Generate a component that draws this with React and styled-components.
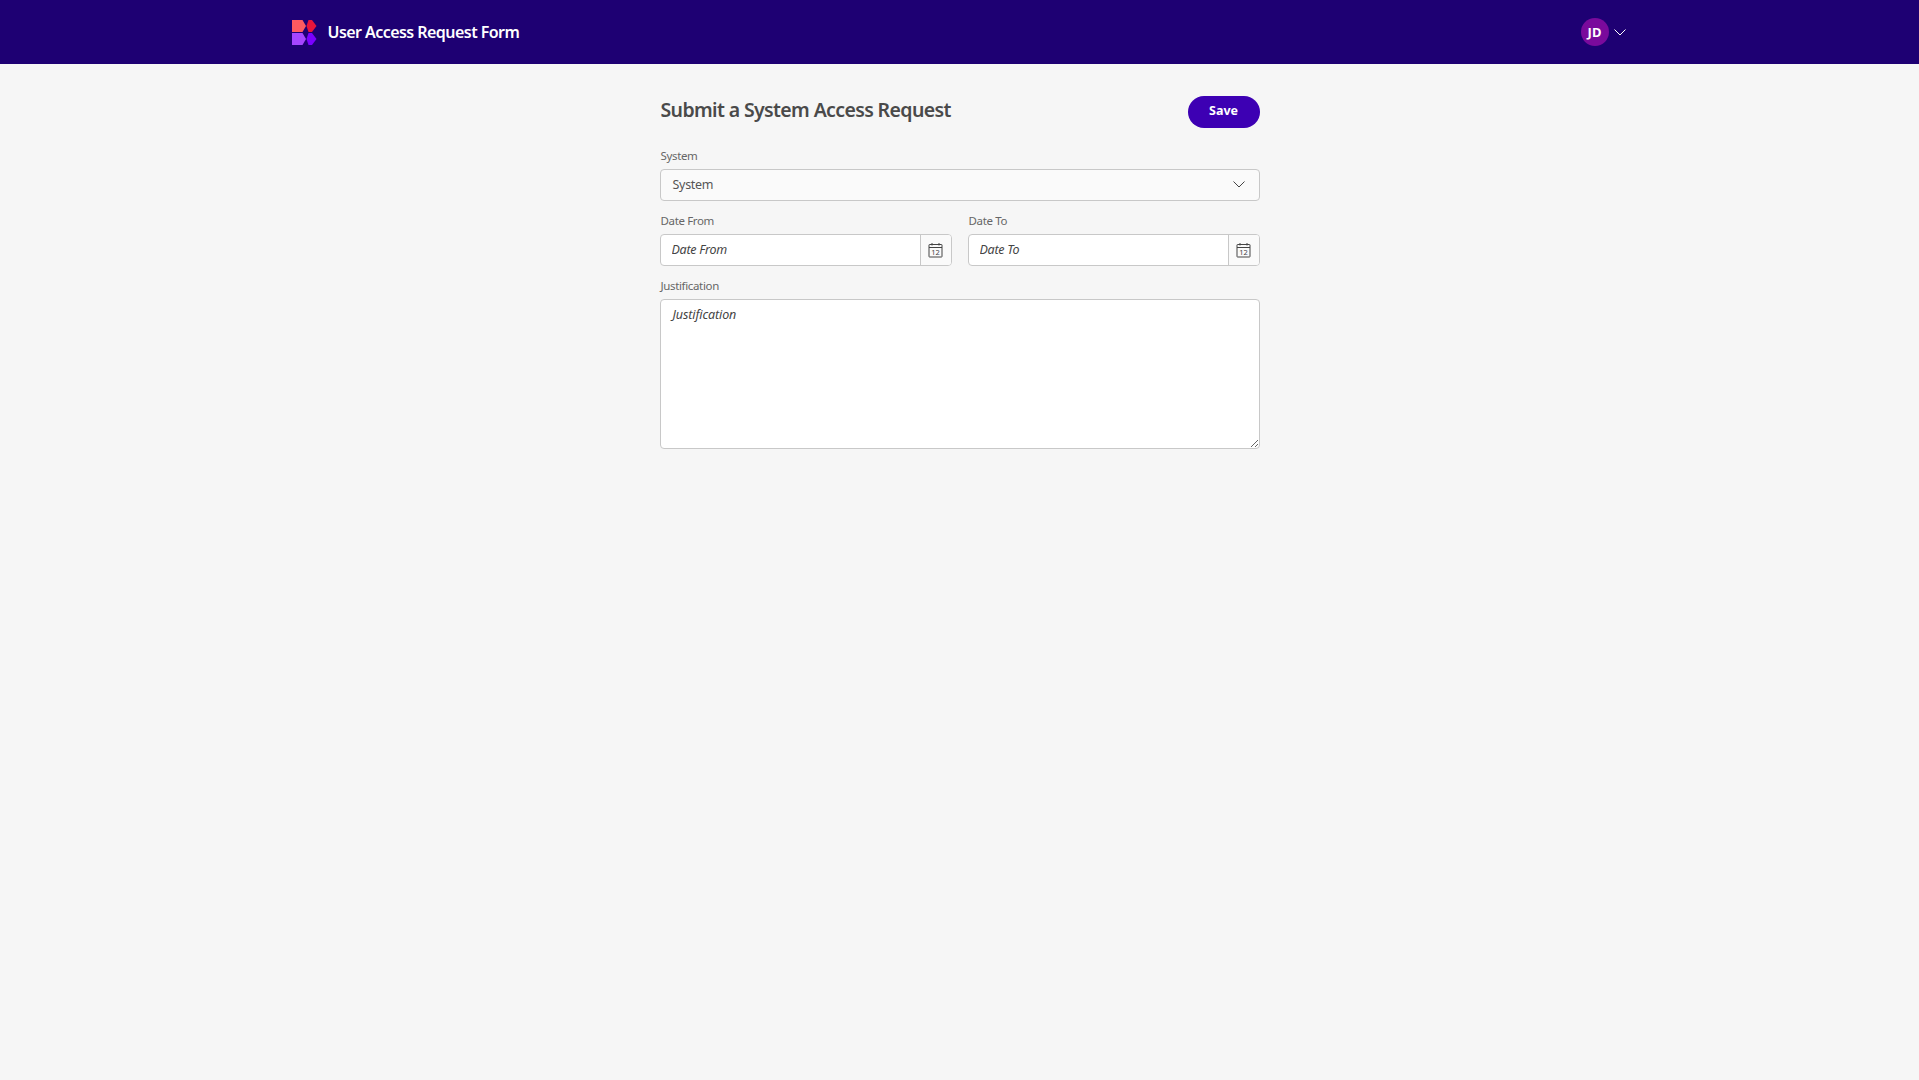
import styled, { createGlobalStyle } from 'styled-components';

const GlobalStyle = createGlobalStyle`
    html, body {
        margin: 0;
        padding: 0;
        background-color: #f6f6f6;
    }
    * {
        box-sizing: border-box;
    }
`
const font = `"Noto Sans", "Open Sans", sans-serif`;

const Page = styled.div`
    min-height: 100vh;
    background-color: #f6f6f6;
    font-family: ${font};
`
const TopBar = styled.header`
    height: 64px;
    background-color: #1e0073;
    display: flex;
    justify-content: center;
`
const TopBarInner = styled.div`
    width: 1360px;
    padding: 0 13px 0 12px;
    display: flex;
    align-items: center;
    justify-content: space-between;
`
const Brand = styled.div`
    display: flex;
    align-items: center;
    gap: 11px;
`
const AppName = styled.span`
    color: #fff;
    font-size: 16px;
    font-weight: 600;
    letter-spacing: -0.55px;
`
const UserMenu = styled.div`
    display: flex;
    align-items: center;
    gap: 4px;
`
const Avatar = styled.div`
    width: 28px;
    height: 28px;
    border-radius: 50%;
    background-color: #7a0a9c;
    color: #fff;
    font-size: 13px;
    font-weight: 700;
    display: flex;
    align-items: center;
    justify-content: center;
`
const Content = styled.main`
    width: 600px;
    margin: 0 auto;
    padding-top: 32px;
`
const TitleRow = styled.div`
    display: flex;
    align-items: flex-start;
    justify-content: space-between;
    height: 51px;
`
const Title = styled.h1`
    margin: 0;
    padding-left: 1px;
    color: #4a4a4a;
    font-size: 19.5px;
    line-height: 28px;
    font-weight: 600;
    letter-spacing: -0.63px;
`
const SaveButton = styled.button`
    width: 72px;
    height: 32px;
    border: 0;
    border-radius: 16px;
    background-color: #3d00b3;
    color: #fff;
    font-family: ${font};
    font-size: 12.5px;
    font-weight: 700;
    padding: 0 0 3px 0;
`
const Field = styled.div`
    margin-bottom: 11px;
    flex: 1;
`
const Label = styled.label`
    display: block;
    height: 22px;
    padding-left: 1px;
    color: #666;
    font-size: 11.5px;
    line-height: 18px;
    letter-spacing: -0.35px;
`
const Select = styled.div`
    height: 32px;
    border: 1px solid #c8c8c8;
    border-radius: 4px;
    background-color: #fafafa;
    color: #555;
    font-size: 12.5px;
    letter-spacing: -0.3px;
    padding: 0 13px 2px 12px;
    display: flex;
    align-items: center;
    justify-content: space-between;
`
const Row = styled.div`
    display: flex;
    gap: 16px;
`
const InputGroup = styled.div`
    height: 32px;
    display: flex;
    border: 1px solid #c8c8c8;
    border-radius: 4px;
    background-color: #fff;
    overflow: hidden;
`
const placeholder = `
    color: #444;
    font-family: ${font};
    font-size: 12.5px;
    font-style: italic;
    letter-spacing: -0.25px;
    &::placeholder {
        color: #444;
        opacity: 1;
    }
`
const DateInput = styled.input`
    ${placeholder}
    flex: 1;
    min-width: 0;
    border: 0;
    outline: 0;
    padding: 0 11px 2px 11px;
    background: transparent;
`
const Addon = styled.div`
    width: 31px;
    border-left: 1px solid #c8c8c8;
    background-color: #fafafa;
    display: flex;
    align-items: center;
    justify-content: center;
`
const TextArea = styled.textarea`
    ${placeholder}
    display: block;
    width: 100%;
    height: 150px;
    border: 1px solid #c8c8c8;
    border-radius: 4px;
    background-color: #fff;
    outline: 0;
    padding: 6px 11px 6px 12px;
    line-height: 18px;
    letter-spacing: -0.1px;
`

function Logo() {
    return (
        <svg width="25" height="26" viewBox="0 0 25 26">
            <path d="M0 1h10.500l3.500 6-3.500 6H0z" fill="#ff5a60" />
            <path d="M16.500 1h3.500l4.500 6-4.500 6h-3.500l-2-6z" fill="#e8153c" />
            <path d="M0 14h10.500l3.500 6-3.500 6H0z" fill="#a545ff" />
            <path d="M16.500 14h3.500l4.500 6-4.500 6h-3.500l-2-6z" fill="#7a00ff" />
        </svg>
    )
}

function Chevron({ size = 14, color = '#444' }) {
    return (
        <svg width={size} height={size} viewBox="0 0 14 14" fill="none" stroke={color} strokeWidth="1">
            <path d="M1.500 4.500L7 10l5.500-5.500" />
        </svg>
    )
}

function CalendarIcon() {
    return (
        <svg width="15" height="16" viewBox="0 0 15 16" fill="none" stroke="#444" strokeWidth="1">
            <rect x="1" y="2.500" width="13" height="12.500" rx="0.500" />
            <path d="M1 5.500h13M4 1v2.500M11 1v2.500" />
            <text x="7.500" y="13.300" fontSize="7.500" fontFamily={font} fill="#444" stroke="none" textAnchor="middle">12</text>
        </svg>
    )
}

function DateField({ label }) {
    return (
        <Field>
            <Label>{label}</Label>
            <InputGroup>
                <DateInput placeholder={label} />
                <Addon><CalendarIcon /></Addon>
            </InputGroup>
        </Field>
    )
}

export default function App() {
    return (
        <Page>
            <GlobalStyle />
            <TopBar>
                <TopBarInner>
                    <Brand>
                        <Logo />
                        <AppName>User Access Request Form</AppName>
                    </Brand>
                    <UserMenu>
                        <Avatar>JD</Avatar>
                        <Chevron color="#fff" />
                    </UserMenu>
                </TopBarInner>
            </TopBar>
            <Content>
                <TitleRow>
                    <Title>Submit a System Access Request</Title>
                    <SaveButton>Save</SaveButton>
                </TitleRow>
                <Field>
                    <Label>System</Label>
                    <Select>
                        System
                        <Chevron />
                    </Select>
                </Field>
                <Row>
                    <DateField label="Date From" />
                    <DateField label="Date To" />
                </Row>
                <Field>
                    <Label>Justification</Label>
                    <TextArea placeholder="Justification" />
                </Field>
            </Content>
        </Page>
    )
}
